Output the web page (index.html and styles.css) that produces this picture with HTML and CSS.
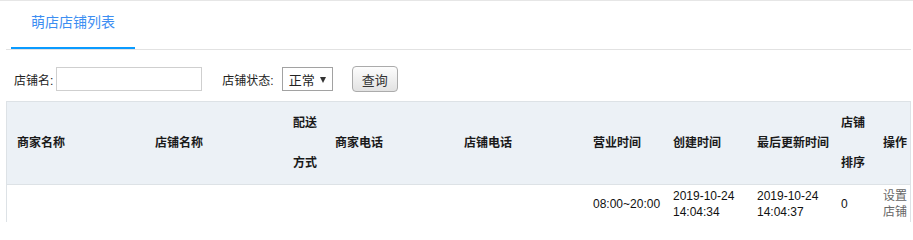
FILE: index.html
```html
<!DOCTYPE html>
<html lang="zh">
<head>
<meta charset="utf-8">
<title>萌店店铺列表</title>
<link rel="stylesheet" href="styles.css">
</head>
<body>
<div class="page">
  <div class="panel">
    <div class="tabs">
      <div class="tab is-active">萌店店铺列表</div>
    </div>
    <form class="filters">
      <label class="filter-label" for="shop-name">店铺名:</label>
      <input class="text-input" id="shop-name" type="text">
      <span class="filter-label filter-gap">店铺状态:</span>
      <div class="select"><span class="select-value">正常</span><span class="select-arrow"></span></div>
      <button class="btn" type="button">查询</button>
    </form>
    <table class="grid">
      <colgroup>
        <col class="c-138"><col class="c-138"><col class="c-42"><col class="c-129"><col class="c-129">
        <col class="c-80"><col class="c-84"><col class="c-84"><col class="c-42"><col>
      </colgroup>
      <thead>
        <tr>
          <th>商家名称</th>
          <th>店铺名称</th>
          <th>配送方式</th>
          <th>商家电话</th>
          <th>店铺电话</th>
          <th>营业时间</th>
          <th>创建时间</th>
          <th>最后更新时间</th>
          <th>店铺排序</th>
          <th>操作</th>
        </tr>
      </thead>
      <tbody>
        <tr>
          <td></td>
          <td></td>
          <td></td>
          <td></td>
          <td></td>
          <td class="nowrap">08:00~20:00</td>
          <td>2019-10-24 14:04:34</td>
          <td>2019-10-24 14:04:37</td>
          <td>0</td>
          <td class="action">设置店铺</td>
        </tr>
      </tbody>
    </table>
  </div>
</div>
</body>
</html>
```

FILE: styles.css
```css
* { box-sizing: border-box; }
html, body { margin: 0; padding: 0; background: #fff; }
body {
  font-family: "Liberation Sans", "Noto Sans CJK SC", sans-serif;
  font-size: 12px;
  color: #333;
}
.page {
  border-top: 1px solid #e6e6e6;
  overflow: hidden;
  height: 222px;
}
.panel {
  margin: 0 2px 0 6px;
}
.tabs {
  display: flex;
  border-bottom: 1px solid #e2e2e2;
}
.tab {
  margin-left: 5px;
  width: 124px;
  text-align: center;
  font-size: 14px;
  line-height: 40px;
  padding-top: 1px;
  padding-bottom: 5px;
  border-bottom: 2px solid transparent;
  color: #333;
}
.tab.is-active {
  color: #3d8ef2;
  border-bottom-color: #0a9bff;
}
.filters {
  display: flex;
  align-items: center;
  height: 26px;
  margin: 16px 0 0;
  padding: 0 8px;
}
.filter-label {
  color: #222;
  font-size: 12px;
}
.filter-gap { margin-left: 20px; }
.text-input {
  margin: 0 0 0 3px;
  width: 146px;
  height: 24px;
  border: 1px solid #cfcfcf;
  padding: 0 4px;
  font: inherit;
  outline: none;
}
.select {
  position: relative;
  margin-left: 8px;
  width: 51px;
  height: 24px;
  border: 1px solid #a2a2a2;
  background: #fff;
  display: flex;
  align-items: center;
  padding-left: 6px;
  font-size: 13px;
  color: #222;
}
.select-arrow {
  position: absolute;
  right: 6px;
  top: 9px;
  width: 0;
  height: 0;
  border-left: 3px solid transparent;
  border-right: 3px solid transparent;
  border-top: 6px solid #333;
}
.btn {
  margin-left: 19px;
  width: 46px;
  height: 26px;
  border: 1px solid #ababab;
  border-radius: 4px;
  background: linear-gradient(#fdfdfd, #e2e2e2);
  font-family: inherit;
  font-size: 13px;
  color: #333;
  padding: 0;
}
.grid {
  margin-top: 9px;
  width: 100%;
  table-layout: fixed;
  border-collapse: separate;
  border-spacing: 0;
  border: 1px solid #dde2e6;
  border-bottom: none;
}
.c-138 { width: 138px; }
.c-129 { width: 129px; }
.c-84 { width: 84px; }
.c-80 { width: 80px; }
.c-42 { width: 42px; }
.grid th {
  background: #ecf1f6;
  font-weight: bold;
  color: #1a1a1a;
  text-align: left;
  line-height: 40px;
  padding: 1px 2px 1px 10px;
  border-bottom: 1px solid #dde2e6;
  vertical-align: middle;
}
.grid td {
  color: #111;
  line-height: 15.5px;
  padding: 4px 2px 4px 10px;
  vertical-align: middle;
  border-bottom: 1px solid #e6e6e6;
}
.grid td.nowrap { white-space: nowrap; }
.grid td.action { color: #666; }
```
